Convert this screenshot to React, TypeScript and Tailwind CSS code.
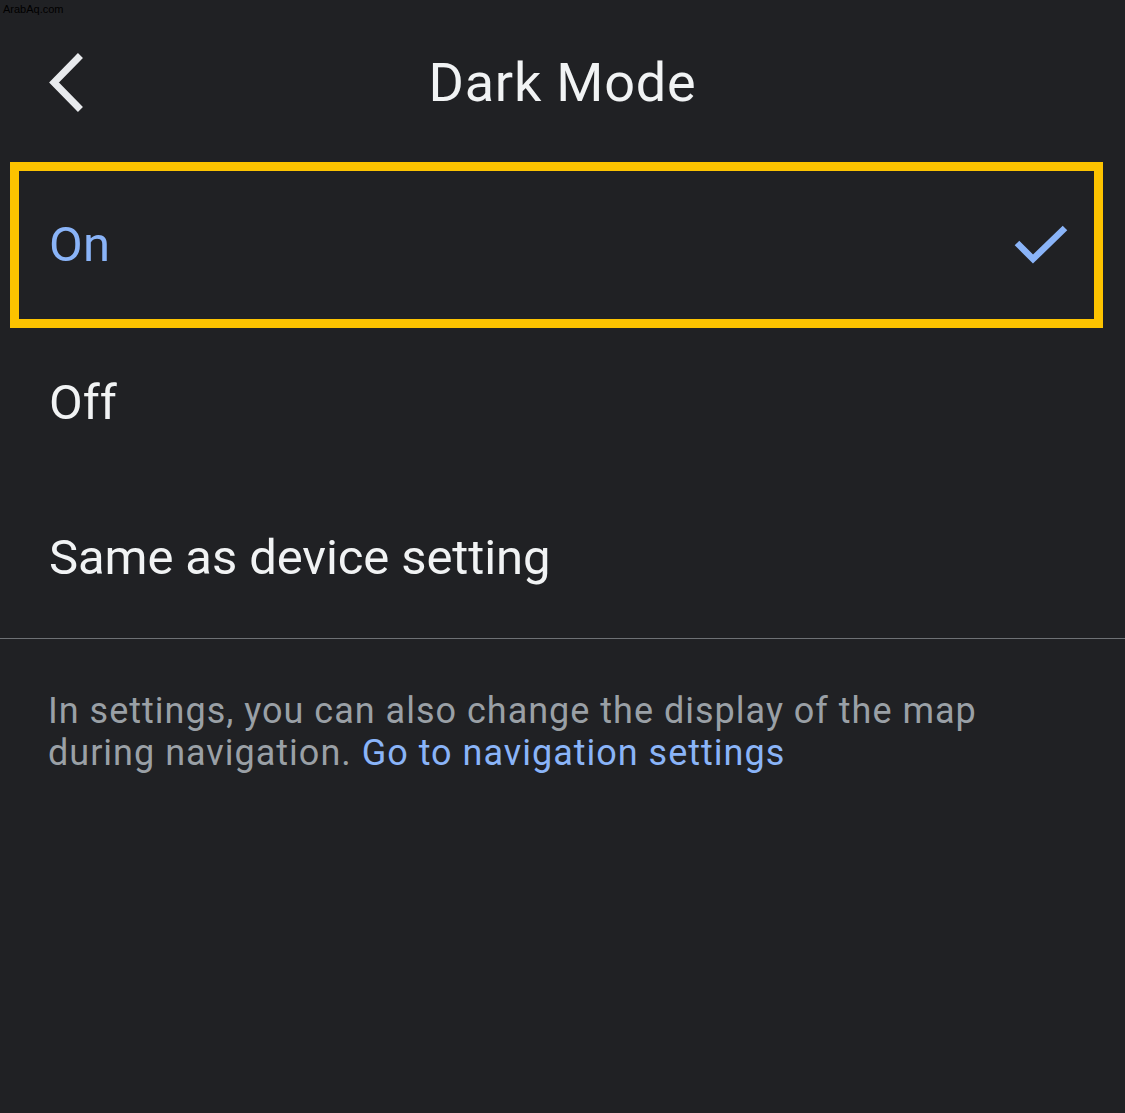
import React from "react";

export default function App() {
  return (
    <div
      className="relative w-[1125px] h-[1113px] bg-[#202124] overflow-hidden"
      style={{ fontFamily: "Roboto, 'Noto Sans', sans-serif" }}
    >
      <div className="absolute left-[3px] top-[2px] text-[11px] leading-[14px] text-black" style={{ fontFamily: "'Liberation Sans', Arial, sans-serif" }}>
        ArabAq.com
      </div>

      <header className="relative h-[162px] flex items-start justify-center">
        <button className="absolute left-[44px] top-[52px] w-[44px] h-[64px] flex items-center justify-center">
          <svg width="44" height="64" viewBox="0 0 44 64" fill="none">
            <path d="M34 6 L10 30.5 L34 55" stroke="#e8eaed" strokeWidth="7" strokeLinecap="square" strokeLinejoin="miter" />
          </svg>
        </button>
        <h1 className="mt-[50px] text-[54px] leading-[66px] text-[#f1f3f4] font-normal tracking-[0.8px]">
          Dark Mode
        </h1>
      </header>

      <div className="ml-[10px] mr-[22px] h-[166px] border-[9px] border-[#fcc300] flex items-center justify-between pl-[30px] pr-[26px]">
        <span className="text-[49px] leading-[56px] text-[#8ab4f8] tracking-[0.4px]">On</span>
        <svg width="54" height="42" viewBox="0 0 54 42" fill="none">
          <path d="M3 19 L19 35 L51 4" stroke="#8ab4f8" strokeWidth="6.5" />
        </svg>
      </div>

      <div className="h-[150px] flex items-center pl-[49px]">
        <span className="text-[49px] leading-[56px] text-[#f1f3f4]">Off</span>
      </div>
      <div className="h-[160px] flex items-center pl-[49px]">
        <span className="text-[49px] leading-[56px] text-[#f1f3f4] tracking-[-0.1px]">Same as device setting</span>
      </div>

      <div className="h-px bg-[#6e7175]" />

      <p className="mt-[51px] px-[48px] text-[36px] leading-[42px] text-[#9aa0a6] tracking-[1px]">
        In settings, you can also change the display of the map
        <br />
        during navigation. <span className="text-[#8ab4f8]">Go to navigation settings</span>
      </p>
    </div>
  );
}
